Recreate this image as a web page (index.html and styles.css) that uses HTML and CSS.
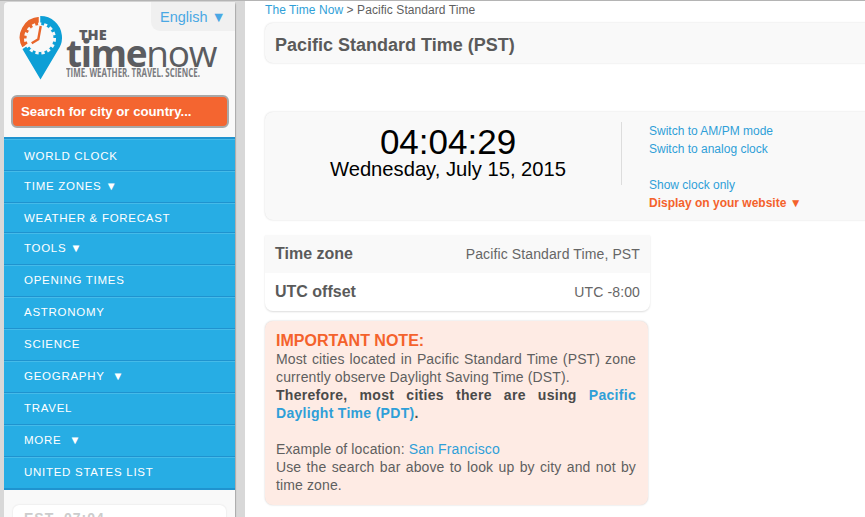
FILE: index.html
```html
<!DOCTYPE html>
<html lang="en">
<head>
    <meta charset="UTF-8">
    <meta name="viewport" content="width=device-width, initial-scale=1.0">
    <title>Pacific Standard Time (PST)</title>
    <link rel="stylesheet" href="styles.css">
</head>
<body>
    <aside class="sidebar">
        <div class="panel">
            <div class="brand">
                <a class="lang" href="#">English ▼</a>
                <div class="logo">
                    <svg class="logo-pin" width="43" height="64" viewBox="19 16 43 64">
                        <path fill="#0d9fd6" d="M40.5 79.5L23 50A21.5 21.5 0 1 1 58 50Z"/>
                        <path fill="#e8652a" stroke="#f9f9f9" stroke-width="1.5" d="M39.5 16L39.5 37L22 48.5A21.5 21.5 0 0 1 39.5 16Z"/>
                        <circle cx="40" cy="38.5" r="13.5" fill="#f9f9f9"/>
                        <circle cx="40" cy="38.5" r="14.5" fill="none" stroke="#f9f9f9" stroke-width="3" stroke-dasharray="3.2 2.8"/>
                        <path fill="none" stroke="#e8652a" stroke-width="2.4" d="M40.7 26L38.3 39.3L31.7 43.3"/>
                    </svg>
                    <div class="logo-text">
                        <div class="logo-the">THE</div>
                        <div class="logo-name"><b>time</b>now</div>
                        <div class="logo-tag">TIME. WEATHER. TRAVEL. SCIENCE.</div>
                    </div>
                </div>
                <div class="search">Search for city or country...</div>
            </div>
            <ul class="menu">
                <li class="low">WORLD CLOCK</li>
                <li>TIME ZONES ▼</li>
                <li class="short">WEATHER &amp; FORECAST</li>
                <li>TOOLS ▼</li>
                <li>OPENING TIMES</li>
                <li>ASTRONOMY</li>
                <li>SCIENCE</li>
                <li>GEOGRAPHY &nbsp;▼</li>
                <li>TRAVEL</li>
                <li>MORE &nbsp;▼</li>
                <li>UNITED STATES LIST</li>
            </ul>
            <div class="zones">
                <div class="zone-card">EST &nbsp;07:04</div>
            </div>
        </div>
    </aside>

    <main class="content">
        <div class="crumbs"><a href="#">The Time Now</a> &gt; Pacific Standard Time</div>
        <div class="card title-card">
            <h1>Pacific Standard Time (PST)</h1>
        </div>

        <div class="card clock-card">
            <div class="clock">
                <div class="clock-time">04:04:29</div>
                <div class="clock-date">Wednesday, July 15, 2015</div>
            </div>
            <div class="clock-divider"></div>
            <div class="clock-links">
                <a href="#">Switch to AM/PM mode</a>
                <a href="#">Switch to analog clock</a>
                <a class="gap" href="#">Show clock only</a>
                <a class="display" href="#">Display on your website ▼</a>
            </div>
        </div>

        <div class="info">
            <div class="info-row shaded">
                <span class="info-key">Time zone</span>
                <span>Pacific Standard Time, PST</span>
            </div>
            <div class="info-row">
                <span class="info-key">UTC offset</span>
                <span>UTC -8:00</span>
            </div>
        </div>

        <div class="note">
            <div class="note-head">IMPORTANT NOTE:</div>
            <p>Most cities located in Pacific Standard Time (PST) zone currently observe Daylight Saving Time (DST).<br>
            <b>Therefore, most cities there are using <a href="#">Pacific Daylight Time (PDT)</a>.</b></p>
            <p>Example of location: <a href="#">San Francisco</a><br>
            Use the search bar above to look up by city and not by time zone.</p>
        </div>
    </main>
</body>
</html>
```

FILE: styles.css
```css
html, body {
    height: 517px;
    overflow: hidden;
}

body {
    display: flex;
    box-sizing: border-box;
    margin: 0;
    border-top: 1px solid #b4b4b4;
    background-color: #fff;
    color: #5f5f5f;
    font-family: "Liberation Sans", Arial, sans-serif;
}

a {
    color: #2f9fd8;
    text-decoration: none;
}

.sidebar {
    flex: 0 0 245px;
    min-width: 0;
    box-sizing: border-box;
    padding: 1px 10px 0 4px;
    background-color: #d8d8d8;
}

.panel {
    height: 600px;
    background-color: #f9f9f9;
    border-radius: 4px 4px 0 0;
    box-shadow: 1px 0 1px #aaa;
}

.brand {
    position: relative;
    height: 135px;
    padding: 14px 0 0 15px;
    box-sizing: border-box;
}

.lang {
    position: absolute;
    top: 0;
    right: 0;
    width: 84px;
    height: 29px;
    line-height: 31px;
    text-align: center;
    font-size: 14.5px;
    color: #4aa8e4;
    background-color: #f0f0f0;
    border-bottom-left-radius: 9px;
}

.logo {
    display: flex;
    align-items: flex-start;
}

.logo-text {
    width: 151px;
    margin-left: 4px;
    margin-top: 12px;
    color: #5b5c60;
    font-family: "Open Sans", sans-serif;
}

.logo-the {
    margin-left: 13px;
    font-size: 14.5px;
    font-weight: 800;
    line-height: 13px;
}

.logo-name {
    margin-top: -1px;
    font-size: 37px;
    line-height: 26px;
    letter-spacing: -1.3px;
}

.logo-tag {
    width: 230px;
    margin-top: 1px;
    font-size: 12px;
    font-weight: 700;
    line-height: 12px;
    color: #7b7c80;
    white-space: nowrap;
    transform: scaleX(0.66);
    transform-origin: left;
}

.search {
    position: absolute;
    left: 7px;
    top: 93px;
    width: 218px;
    height: 33px;
    box-sizing: border-box;
    padding-left: 8px;
    line-height: 29px;
    font-size: 13.2px;
    font-weight: 700;
    color: #fff;
    background-color: #f46530;
    border: 2px solid #a8a8a8;
    border-radius: 6px;
}

.menu {
    margin: 0;
    padding: 0;
    list-style: none;
    border-top: 2px solid #1f93cf;
    border-bottom: 1px solid #1f93cf;
}

.menu li {
    height: 32px;
    box-sizing: border-box;
    padding-left: 20px;
    line-height: 29px;
    font-size: 11.5px;
    letter-spacing: 0.72px;
    color: #fff;
    background-color: #27ade4;
    border-top: 1px solid #45bbe9;
    border-bottom: 1px solid #1f93cf;
}

.menu .low {
    line-height: 33px;
}

.menu .short {
    height: 30px;
}

.zones {
    padding: 15px 9px 0;
}

.zone-card {
    height: 60px;
    padding: 5px 11px;
    font-size: 14px;
    font-weight: 700;
    letter-spacing: 1px;
    color: #ccc;
    background-color: #fff;
    border-radius: 6px;
    box-shadow: 0 0 2px #ddd;
}

.content {
    flex: 1;
    min-width: 0;
    padding-left: 20px;
    font-size: 14px;
}

.crumbs {
    height: 22px;
    line-height: 19px;
    font-size: 12px;
    letter-spacing: 0.07px;
}

.card {
    width: 700px;
    box-sizing: border-box;
    background-color: #f9f9f9;
    border-radius: 8px;
    box-shadow: 0 0 2px #d4d4d4;
}

.title-card {
    height: 40px;
    padding-left: 10px;
}

h1 {
    margin: 0;
    line-height: 45px;
    font-size: 18px;
    color: #5a5a5a;
}

.clock-card {
    display: flex;
    height: 108px;
    margin-top: 49px;
}

.clock {
    width: 346px;
    padding: 12px 0 0 10px;
    text-align: center;
    color: #000;
}

.clock-time {
    font-size: 35px;
    line-height: 36px;
}

.clock-date {
    font-size: 20.2px;
    line-height: 18px;
}

.clock-divider {
    width: 1px;
    height: 63px;
    margin-top: 10px;
    background-color: #ddd;
}

.clock-links {
    display: flex;
    flex-direction: column;
    align-items: flex-start;
    padding: 10px 0 0 27px;
    font-size: 12px;
    line-height: 18px;
}

.clock-links .gap {
    margin-top: 18px;
}

.clock-links .display {
    font-weight: 700;
    color: #f4622c;
}

.info {
    width: 385px;
    margin-top: 15px;
    border-radius: 0 0 8px 8px;
    box-shadow: 0 1px 2px #ddd;
}

.info-row {
    display: flex;
    justify-content: space-between;
    align-items: center;
    height: 38px;
    padding: 0 10px;
    letter-spacing: 0.12px;
    color: #666;
}

.info-row.shaded {
    background-color: #f9f9f9;
}

.info-key {
    font-size: 16px;
    font-weight: 700;
    letter-spacing: 0;
    color: #5a5a5a;
}

.note {
    width: 383px;
    height: 184px;
    box-sizing: border-box;
    margin-top: 10px;
    padding: 10px 12px 0 11px;
    line-height: 18px;
    text-align: justify;
    background-color: #feebe4;
    border-radius: 8px;
    box-shadow: 0 0 2px #ccc;
}

.note-head {
    font-size: 16px;
    font-weight: 700;
    line-height: 19px;
    color: #f4622c;
}

.note p {
    margin: 0 0 18px;
    letter-spacing: 0.13px;
}

.note b {
    letter-spacing: 0.3px;
    color: #4a4a4a;
}

.note b a {
    color: #2f9fd8;
}
```
